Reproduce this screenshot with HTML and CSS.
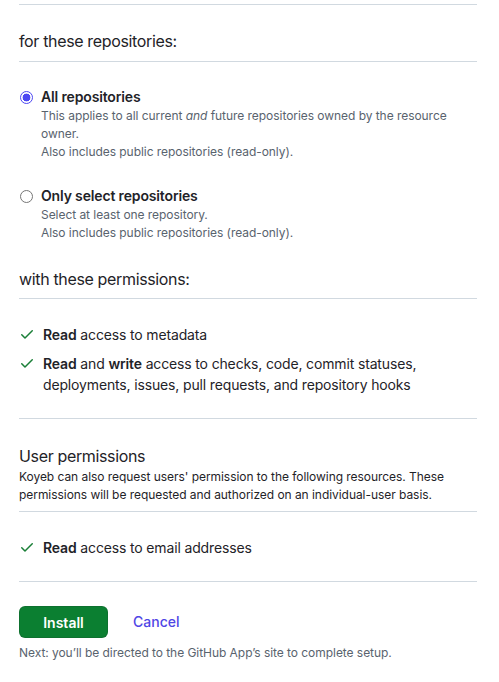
FILE: index.html
```html
<!DOCTYPE html>
<html lang="en">
<head>
<meta charset="utf-8">
<title>Install GitHub App</title>
<link rel="stylesheet" href="styles.css">
</head>
<body>
<main class="page">
  <section class="block">
    <h3 class="heading">for these repositories:</h3>
  </section>

  <section class="block options">
    <label class="option">
      <input class="radio" type="radio" name="repos" checked>
      <span class="option-body">
        <span class="option-title">All repositories</span>
        <span class="option-desc">This applies to all current <em>and</em> future repositories owned by the resource owner.</span>
        <span class="option-desc">Also includes public repositories (read-only).</span>
      </span>
    </label>
    <label class="option">
      <input class="radio" type="radio" name="repos">
      <span class="option-body">
        <span class="option-title">Only select repositories</span>
        <span class="option-desc">Select at least one repository.</span>
        <span class="option-desc">Also includes public repositories (read-only).</span>
      </span>
    </label>
    <h3 class="heading heading-perm">with these permissions:</h3>
  </section>

  <section class="block perms">
    <ul class="perm-list">
      <li class="perm">
        <svg class="check" viewBox="0 0 16 16" width="16" height="16"><path d="M13.78 4.22a.75.75 0 0 1 0 1.06l-7.25 7.25a.75.75 0 0 1-1.06 0L2.22 9.28a.75.75 0 0 1 1.06-1.06L6 10.94l6.72-6.72a.75.75 0 0 1 1.06 0Z"/></svg>
        <span class="perm-text"><strong>Read</strong> access to metadata</span>
      </li>
      <li class="perm">
        <svg class="check" viewBox="0 0 16 16" width="16" height="16"><path d="M13.78 4.22a.75.75 0 0 1 0 1.06l-7.25 7.25a.75.75 0 0 1-1.06 0L2.22 9.28a.75.75 0 0 1 1.06-1.06L6 10.94l6.72-6.72a.75.75 0 0 1 1.06 0Z"/></svg>
        <span class="perm-text"><strong>Read</strong> and <strong>write</strong> access to checks, code, commit statuses, deployments, issues, pull requests, and repository hooks</span>
      </li>
    </ul>
  </section>

  <section class="block user">
    <h3 class="user-title">User permissions</h3>
    <p class="user-desc">Koyeb can also request users' permission to the following resources. These permissions will be requested and authorized on an individual-user basis.</p>
  </section>

  <section class="block perms">
    <ul class="perm-list">
      <li class="perm">
        <svg class="check" viewBox="0 0 16 16" width="16" height="16"><path d="M13.78 4.22a.75.75 0 0 1 0 1.06l-7.25 7.25a.75.75 0 0 1-1.06 0L2.22 9.28a.75.75 0 0 1 1.06-1.06L6 10.94l6.72-6.72a.75.75 0 0 1 1.06 0Z"/></svg>
        <span class="perm-text"><strong>Read</strong> access to email addresses</span>
      </li>
    </ul>
  </section>

  <section class="block actions">
    <div class="buttons">
      <button class="btn-install" type="button">Install</button>
      <a class="cancel" href="#">Cancel</a>
    </div>
    <p class="note">Next: you’ll be directed to the GitHub App’s site to complete setup.</p>
  </section>
</main>
</body>
</html>
```

FILE: styles.css
```css
html, body {
  margin: 0;
  padding: 0;
  background: #ffffff;
}

body {
  font-family: Inter, "Noto Sans", "Liberation Sans", sans-serif;
  color: #1f2328;
  -webkit-font-smoothing: antialiased;
}

.page {
  padding: 4px 22px 0 19px;
}

.block {
  border-top: 1px solid #d1d9e0;
}

.heading {
  margin: 0;
  padding: 24px 0 8px;
  font-size: 16px;
  line-height: 24px;
  font-weight: 400;
  letter-spacing: -0.35px;
}

.options {
  padding-top: 25px;
  display: flex;
  flex-direction: column;
  gap: 25px;
}

.options .heading {
  padding-top: 0;
  padding-bottom: 7px;
}

.option {
  display: flex;
  align-items: flex-start;
  gap: 8px;
  cursor: pointer;
}

.radio {
  appearance: none;
  -webkit-appearance: none;
  flex: none;
  width: 13px;
  height: 13px;
  margin: 4px 0 0 1px;
  border: 1px solid #767676;
  border-radius: 50%;
  background: #ffffff;
  box-sizing: border-box;
}

.radio:checked {
  border: 1.5px solid #4d48f2;
  background: radial-gradient(circle, #4d48f2 0 3.6px, #ffffff 4.2px);
}

.option-body {
  display: flex;
  flex-direction: column;
}

.option-title {
  font-size: 14px;
  line-height: 20px;
  font-weight: 600;
  color: #1f2328;
  letter-spacing: -0.15px;
}

.option-desc {
  font-size: 12px;
  line-height: 18px;
  color: #59636e;
  letter-spacing: -0.05px;
}

.perms {
  padding: 25px 0 23px;
}

.perm-list {
  list-style: none;
  margin: 0;
  padding: 0;
  display: flex;
  flex-direction: column;
  gap: 8px;
}

.perm {
  display: flex;
  align-items: flex-start;
  gap: 8px;
  font-size: 14px;
  line-height: 21px;
  color: #1f2328;
  letter-spacing: -0.15px;
}

.perm strong {
  font-weight: 600;
}

.check {
  flex: none;
  margin-top: 2px;
  fill: #1a7f37;
}

.user {
  padding: 25px 0 8px;
}

.user-title {
  margin: 0;
  font-size: 16px;
  line-height: 24px;
  font-weight: 400;
  letter-spacing: -0.35px;
}

.user-desc {
  margin: 0;
  font-size: 12px;
  line-height: 17.5px;
  color: #1f2328;
  letter-spacing: -0.05px;
}

.actions {
  padding-top: 24px;
}

.buttons {
  display: flex;
  align-items: center;
  gap: 25px;
}

.btn-install {
  width: 89px;
  height: 32px;
  border: 1px solid rgba(31, 35, 40, 0.15);
  border-radius: 6px;
  background: #0b7f31;
  color: #ffffff;
  font-family: inherit;
  font-size: 14px;
  font-weight: 600;
  cursor: pointer;
}

.cancel {
  color: #4f46e5;
  font-size: 14px;
  font-weight: 500;
  text-decoration: none;
  margin-bottom: 2px;
}

.note {
  margin: 6px 0 0;
  font-size: 12px;
  line-height: 18px;
  color: #59636e;
  letter-spacing: -0.05px;
}
```
